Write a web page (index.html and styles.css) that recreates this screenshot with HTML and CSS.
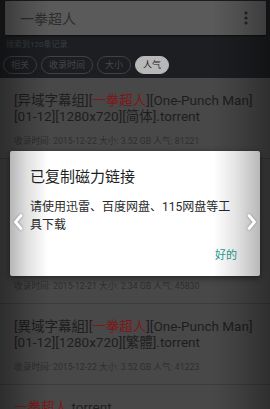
FILE: index.html
```html
<!DOCTYPE html>
<html lang="zh-CN">
<head>
<meta charset="utf-8">
<title>一拳超人</title>
<link rel="stylesheet" href="styles.css">
</head>
<body>
<div class="app">
  <header class="top">
    <div class="search-card">
      <span class="query">一拳超人</span>
      <svg class="more" width="4" height="14" viewBox="0 0 4 14"><circle cx="2" cy="2" r="1.6"/><circle cx="2" cy="7" r="1.6"/><circle cx="2" cy="12" r="1.6"/></svg>
    </div>
    <div class="count">搜索到120条记录</div>
    <div class="chips">
      <span class="chip">相关</span>
      <span class="chip">收录时间</span>
      <span class="chip">大小</span>
      <span class="chip active">人气</span>
    </div>
  </header>
  <ul class="list">
    <li class="item">
      <div class="title">[异域字幕组][<em>一拳超人</em>][One-Punch Man] [01-12][1280x720][简体].torrent</div>
      <div class="meta">收录时间: 2015-12-22 大小: 3.52 GB 人气: 81221</div>
    </li>
    <li class="item">
      <div class="title">[<em>一拳超人</em>]<br>[One-Punch Man]<br>[01-12]<br>[1080p]<br>[BDRip]<br>.torrent</div>
      <div class="meta">收录时间: 2015-12-21 大小: 2.34 GB 人气: 45830</div>
    </li>
    <li class="item">
      <div class="title">[異域字幕組][<em>一拳超人</em>][One-Punch Man] [01-12][1280x720][繁體].torrent</div>
      <div class="meta">收录时间: 2015-12-22 大小: 3.52 GB 人气: 41223</div>
    </li>
    <li class="item">
      <div class="title"><em>一拳超人</em>.torrent</div>
      <div class="meta">收录时间: 2015-12-20 大小: 1.20 GB 人气: 30112</div>
    </li>
  </ul>
</div>

<div class="dialog" role="dialog">
  <h2 class="dialog-title">已复制磁力链接</h2>
  <p class="dialog-msg">请使用迅雷、百度网盘、115网盘等工具下载</p>
  <div class="dialog-actions"><button class="ok">好的</button></div>
</div>

<div class="vignette"></div>

<svg class="arrow arrow-left" width="10" height="16" viewBox="0 0 10 16"><polyline points="8,1.5 2.5,8 8,14.5"/></svg>
<svg class="arrow arrow-right" width="10" height="16" viewBox="0 0 10 16"><polyline points="2,1.5 7.5,8 2,14.5"/></svg>
</body>
</html>
```

FILE: styles.css
```css
* { box-sizing: border-box; }
html, body {
  margin: 0;
  padding: 0;
  width: 270px;
  height: 409px;
  overflow: hidden;
  background: #484848;
  font-family: Roboto, "Noto Sans CJK SC", sans-serif;
}
.app { width: 270px; }

.top {
  background: #1c1e21;
  padding: 1px 4px 4px 0;
}
.search-card {
  margin-left: 5px;
  height: 34px;
  background: #5a5a5a;
  border-radius: 1px;
  box-shadow: 0 1px 2px rgba(0,0,0,.5);
  display: flex;
  align-items: center;
  justify-content: space-between;
  padding: 0 18px 0 15px;
}
.query {
  font-family: "Noto Sans CJK SC", sans-serif;
  font-size: 14px;
  color: #2e2e2e;
  line-height: 16px;
}
.more { fill: #262626; }
.count {
  margin: 4px 0 0 6px;
  font-size: 8px;
  line-height: 12px;
  color: #3b3e41;
}
.chips {
  display: flex;
  gap: 4px;
  margin: 5px 0 0 3px;
}
.chip {
  height: 18px;
  border: 1px solid #3f4245;
  border-radius: 9px;
  padding: 0 7px;
  font-size: 9px;
  line-height: 16px;
  color: #45484b;
  font-family: "Noto Sans CJK SC", sans-serif;
}
.chip.active {
  background: #b8b8b8;
  border-color: #b8b8b8;
  color: #1e1e1e;
}

.list {
  list-style: none;
  margin: 0;
  padding: 0;
}
.item {
  padding: 14px 8px 11px 14px;
  border-bottom: 1px solid #3c3c3c;
}
.title {
  font-size: 13.5px;
  line-height: 16px;
  color: #1e1e1e;
}
.title em {
  font-style: normal;
  color: #7e1717;
}
.meta {
  margin-top: 11px;
  font-size: 8.7px;
  line-height: 12px;
  color: #2e2e2e;
}

.dialog {
  position: absolute;
  left: 10px;
  top: 151px;
  width: 250px;
  height: 125px;
  background: #ffffff;
  border-radius: 2px;
  box-shadow: 0 2px 6px rgba(0,0,0,.5);
  padding: 16px 20px 0 20px;
}
.dialog-title {
  margin: 0;
  font-family: "Noto Sans CJK SC", sans-serif;
  font-weight: normal;
  font-size: 15px;
  line-height: 18px;
  color: #1f1f1f;
}
.dialog-msg {
  margin: 13px 0 0;
  font-size: 12px;
  line-height: 18px;
  color: #2a2a2a;
}
.dialog-actions {
  display: flex;
  justify-content: flex-end;
  margin-top: 13px;
  padding-right: 3px;
}
.ok {
  border: 0;
  background: none;
  padding: 0;
  font-family: "Noto Sans CJK SC", sans-serif;
  font-size: 11px;
  line-height: 14px;
  color: #27a095;
}

.vignette {
  position: fixed;
  inset: 0;
  pointer-events: none;
  background: linear-gradient(to right,
    rgba(0,0,0,.36) 0%,
    rgba(0,0,0,.28) 4%,
    rgba(0,0,0,.12) 10%,
    rgba(0,0,0,0) 18%,
    rgba(0,0,0,0) 79%,
    rgba(0,0,0,.1) 87%,
    rgba(0,0,0,.27) 96%,
    rgba(0,0,0,.34) 100%);
}

.arrow {
  position: absolute;
  top: 214px;
  fill: none;
  stroke: #ffffff;
  stroke-width: 2.8;
  stroke-linecap: round;
  stroke-linejoin: round;
  filter: drop-shadow(0 0 1px rgba(0,0,0,.35));
}
.arrow-left { left: 13px; }
.arrow-right { left: 247px; }
```
